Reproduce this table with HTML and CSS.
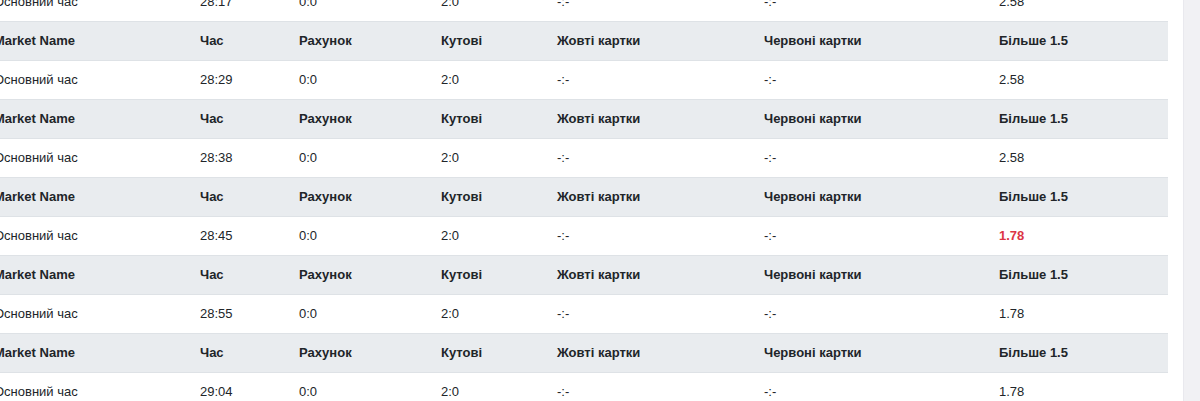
FILE: index.html
```html
<!DOCTYPE html>
<html lang="uk">
<head>
<meta charset="utf-8">
<title>Market table</title>
<link rel="stylesheet" href="styles.css">
</head>
<body>
<div class="page">
  <div class="content">
    <table class="market-table">
      <colgroup>
        <col class="c-name"><col class="c-time"><col class="c-score"><col class="c-corner"><col class="c-yellow"><col class="c-red"><col class="c-over">
      </colgroup>
      <tbody>
        <tr class="data"><td>Основний час</td><td>28:17</td><td>0:0</td><td>2:0</td><td>-:-</td><td>-:-</td><td>2.58</td></tr>
        <tr class="head"><th>Market Name</th><th>Час</th><th>Рахунок</th><th>Кутові</th><th>Жовті картки</th><th>Червоні картки</th><th>Більше 1.5</th></tr>
        <tr class="data"><td>Основний час</td><td>28:29</td><td>0:0</td><td>2:0</td><td>-:-</td><td>-:-</td><td>2.58</td></tr>
        <tr class="head"><th>Market Name</th><th>Час</th><th>Рахунок</th><th>Кутові</th><th>Жовті картки</th><th>Червоні картки</th><th>Більше 1.5</th></tr>
        <tr class="data"><td>Основний час</td><td>28:38</td><td>0:0</td><td>2:0</td><td>-:-</td><td>-:-</td><td>2.58</td></tr>
        <tr class="head"><th>Market Name</th><th>Час</th><th>Рахунок</th><th>Кутові</th><th>Жовті картки</th><th>Червоні картки</th><th>Більше 1.5</th></tr>
        <tr class="data"><td>Основний час</td><td>28:45</td><td>0:0</td><td>2:0</td><td>-:-</td><td>-:-</td><td class="drop">1.78</td></tr>
        <tr class="head"><th>Market Name</th><th>Час</th><th>Рахунок</th><th>Кутові</th><th>Жовті картки</th><th>Червоні картки</th><th>Більше 1.5</th></tr>
        <tr class="data"><td>Основний час</td><td>28:55</td><td>0:0</td><td>2:0</td><td>-:-</td><td>-:-</td><td>1.78</td></tr>
        <tr class="head"><th>Market Name</th><th>Час</th><th>Рахунок</th><th>Кутові</th><th>Жовті картки</th><th>Червоні картки</th><th>Більше 1.5</th></tr>
        <tr class="data"><td>Основний час</td><td>29:04</td><td>0:0</td><td>2:0</td><td>-:-</td><td>-:-</td><td>1.78</td></tr>
      </tbody>
    </table>
  </div>
  <div class="scrollbar"></div>
</div>
</body>
</html>
```
FILE: styles.css
```css
html, body {
  margin: 0;
  padding: 0;
  background: #fff;
}
body {
  font-family: "Liberation Sans", Arial, sans-serif;
  font-size: 13px;
  color: #212529;
}
.page {
  display: flex;
  width: 1200px;
  height: 401px;
  overflow: hidden;
}
.content {
  flex: 1;
  overflow: hidden;
  padding-right: 15px;
}
.scrollbar {
  width: 16px;
  flex: none;
  background: #f1f1f4;
  border-left: 1px solid #e9e9ee;
}
.market-table {
  border-collapse: separate;
  border-spacing: 0;
  table-layout: fixed;
  width: 1186px;
  margin-left: -18px;
  margin-top: -18px;
}
.c-name { width: 206px; }
.c-time { width: 99px; }
.c-score { width: 142px; }
.c-corner { width: 116px; }
.c-yellow { width: 207px; }
.c-red { width: 235px; }
.c-over { width: 181px; }
.market-table td,
.market-table th {
  box-sizing: border-box;
  height: 39px;
  padding: 9px 12px;
  line-height: 20px;
  text-align: left;
  white-space: nowrap;
  border-top: 1px solid #dee2e6;
  vertical-align: middle;
}
.market-table th {
  font-weight: bold;
}
.head {
  background: #e9ecef;
}
.drop {
  color: #dc3545;
  font-weight: bold;
}
```
